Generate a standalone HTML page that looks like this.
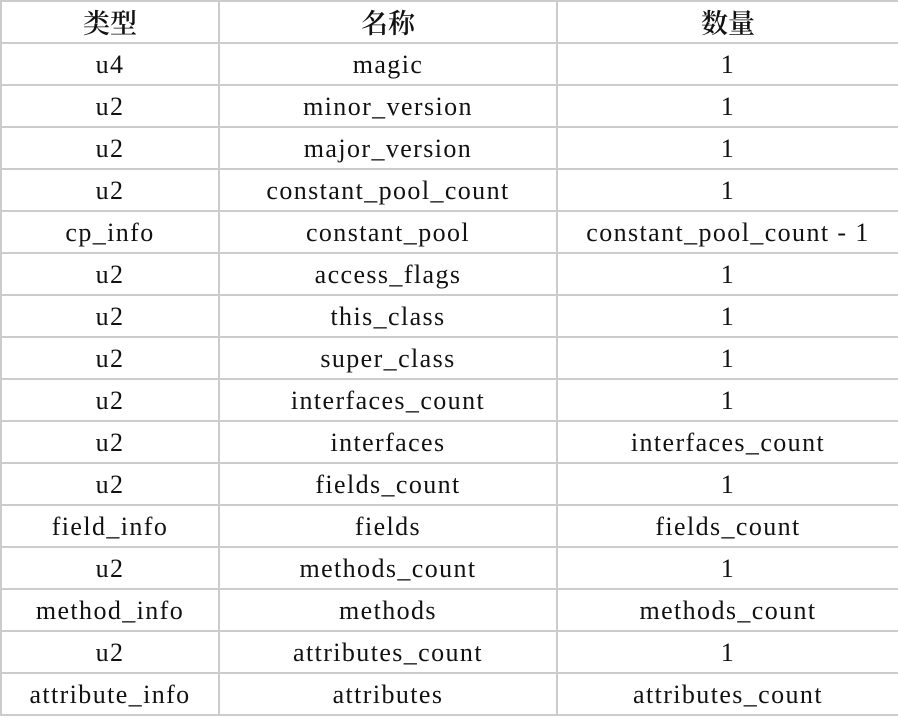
<!DOCTYPE html>
<html><head><meta charset="utf-8"><style>
html,body{margin:0;padding:0;background:#fff;width:898px;height:718px;overflow:hidden}
.h{position:absolute;left:0;width:898px;height:2px;background:#ccc}
.v{position:absolute;top:0;width:2px;height:716px;background:#ccc}
.r{position:absolute;left:0;width:898px;height:42px;font-family:"Liberation Serif","Noto Serif CJK SC",serif;font-size:26px;letter-spacing:1.4px;color:#111}
.r div{position:absolute;top:0;height:42px;line-height:44px;text-align:center;white-space:nowrap}
.a{left:2px;width:216px}.b{left:220px;width:336px}.c{left:558px;width:340px}
.hd{font-family:"Noto Serif CJK SC",serif;font-size:27px;letter-spacing:0;font-weight:600}
.hd div{line-height:44px}
</style></head><body>
<div class="v" style="left:0"></div>
<div class="v" style="left:218px"></div>
<div class="v" style="left:556px"></div>
<div class="h" style="top:0"></div>
<div class="h" style="top:42px"></div><div class="h" style="top:84px"></div><div class="h" style="top:126px"></div><div class="h" style="top:168px"></div><div class="h" style="top:210px"></div><div class="h" style="top:252px"></div><div class="h" style="top:294px"></div><div class="h" style="top:336px"></div><div class="h" style="top:378px"></div><div class="h" style="top:420px"></div><div class="h" style="top:462px"></div><div class="h" style="top:504px"></div><div class="h" style="top:546px"></div><div class="h" style="top:588px"></div><div class="h" style="top:630px"></div><div class="h" style="top:672px"></div><div class="h" style="top:714px"></div>
<div class="r hd" style="top:0px"><div class="a">类型</div><div class="b">名称</div><div class="c">数量</div></div>
<div class="r" style="top:43px"><div class="a">u4</div><div class="b">magic</div><div class="c">1</div></div>
<div class="r" style="top:85px"><div class="a">u2</div><div class="b">minor_version</div><div class="c">1</div></div>
<div class="r" style="top:127px"><div class="a">u2</div><div class="b">major_version</div><div class="c">1</div></div>
<div class="r" style="top:169px"><div class="a">u2</div><div class="b">constant_pool_count</div><div class="c">1</div></div>
<div class="r" style="top:211px"><div class="a">cp_info</div><div class="b">constant_pool</div><div class="c">constant_pool_count - 1</div></div>
<div class="r" style="top:253px"><div class="a">u2</div><div class="b">access_flags</div><div class="c">1</div></div>
<div class="r" style="top:295px"><div class="a">u2</div><div class="b">this_class</div><div class="c">1</div></div>
<div class="r" style="top:337px"><div class="a">u2</div><div class="b">super_class</div><div class="c">1</div></div>
<div class="r" style="top:379px"><div class="a">u2</div><div class="b">interfaces_count</div><div class="c">1</div></div>
<div class="r" style="top:421px"><div class="a">u2</div><div class="b">interfaces</div><div class="c">interfaces_count</div></div>
<div class="r" style="top:463px"><div class="a">u2</div><div class="b">fields_count</div><div class="c">1</div></div>
<div class="r" style="top:505px"><div class="a">field_info</div><div class="b">fields</div><div class="c">fields_count</div></div>
<div class="r" style="top:547px"><div class="a">u2</div><div class="b">methods_count</div><div class="c">1</div></div>
<div class="r" style="top:589px"><div class="a">method_info</div><div class="b">methods</div><div class="c">methods_count</div></div>
<div class="r" style="top:631px"><div class="a">u2</div><div class="b">attributes_count</div><div class="c">1</div></div>
<div class="r" style="top:673px"><div class="a">attribute_info</div><div class="b">attributes</div><div class="c">attributes_count</div></div>
</body></html>
